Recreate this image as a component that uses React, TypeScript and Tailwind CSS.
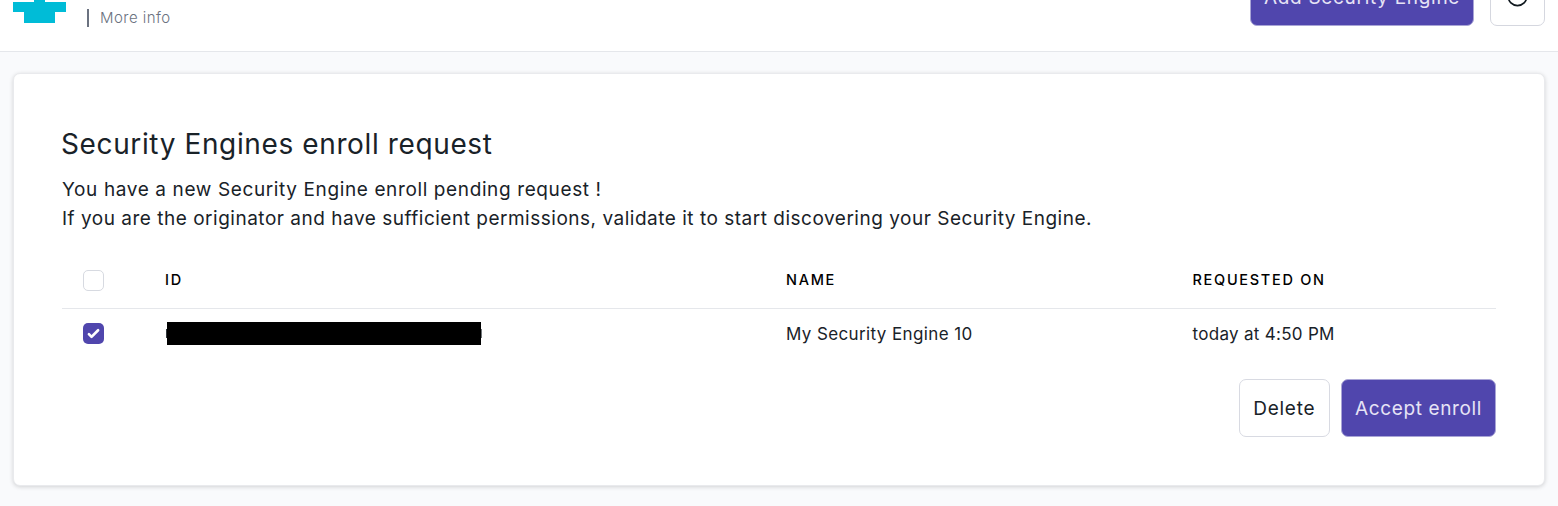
import type { ReactNode } from "react";

function Th({ children }: { children: ReactNode }) {
  return (
    <div className="text-[14.5px] leading-5 font-medium text-black">
      <span className="tracking-[1.7px]">{children}</span>
    </div>
  );
}

function Logo() {
  return (
    <svg width="53" height="23" viewBox="0 0 53 23" fill="#00bcd7" shapeRendering="crispEdges" aria-hidden="true">
      <rect x="21" y="0" width="11" height="2" />
      <rect x="0" y="2" width="53" height="10" />
      <rect x="11" y="12" width="31" height="11" />
    </svg>
  );
}

function Header() {
  return (
    <header className="flex h-[52px] items-start justify-between overflow-hidden border-b border-[#e5e7eb] bg-white px-[13px]">
      <div className="flex">
        <Logo />
        <div className="mt-[9px] ml-[21px] h-[18px] w-[2px] bg-[#6b7280]" />
        <span className="mt-[8px] ml-[11px] text-[15px] leading-5 font-light tracking-[0.45px] whitespace-nowrap text-[#6b7280]">
          More info
        </span>
      </div>
      <div className="-mt-[32px] flex gap-[16px]">
        <button className="flex h-[58px] w-[224px] items-center justify-center rounded-[7px] border border-[#a9a5d6] bg-[#5046ad] pt-[3px] text-[19px] whitespace-nowrap text-[#e6e3f5]">
          <span className="tracking-[0.7px]">Add Security Engine</span>
        </button>
        <button className="flex h-[58px] w-[55px] items-center justify-center rounded-[7px] border border-[#d5d7df] bg-white">
          <svg width="22" height="22" viewBox="0 0 22 22" fill="none" stroke="#111a20" strokeWidth="1.7">
            <circle cx="10.5" cy="10.3" r="9.3" />
          </svg>
        </button>
      </div>
    </header>
  );
}

export default function App() {
  return (
    <div className="h-[506px] overflow-hidden bg-[#f9fafc] font-['Inter','Liberation_Sans',sans-serif] text-[#192228]">
      <Header />
      <main className="px-[13px] pt-[21px]">
        <section className="flex h-[413px] flex-col rounded-[7px] border border-[#e9eaed] bg-white px-[48px] pt-[50px] shadow-[0_1px_4px_rgba(0,0,0,0.16)]">
          <h1 className="-ml-px h-[40px] text-[28px] leading-[40px] whitespace-nowrap">
            <span className="tracking-[0.62px]">Security Engines enroll request</span>
          </h1>
          <div className="mt-[11px] text-[19px] leading-[29px] whitespace-nowrap">
            <p><span className="tracking-[0.62px]">You have a new Security Engine enroll pending request !</span></p>
            <p><span className="tracking-[0.51px]">If you are the originator and have sufficient permissions, validate it to start discovering your Security Engine.</span></p>
          </div>
          <div className="mt-[19px] grid h-[57px] w-[1434px] grid-cols-[103px_621px_406.5px_1fr] items-center border-b border-[#e5e7eb]">
            <div className="pt-px pl-[21px]">
              <div className="h-[21px] w-[21px] rounded-[5px] border border-[#d7dae1] bg-white" />
            </div>
            <Th>ID</Th>
            <Th>NAME</Th>
            <Th>REQUESTED ON</Th>
          </div>
          <div className="grid h-[50px] w-[1434px] grid-cols-[103px_621px_406.5px_1fr] items-center text-[17px] leading-6">
            <div className="pb-px pl-[21px]">
              <div className="flex h-[21px] w-[21px] items-center justify-center rounded-[5px] bg-[#5046ad]">
                <svg width="21" height="21" viewBox="0 0 16 16" fill="white">
                  <path d="M12.207 4.793a1 1 0 010 1.414l-5 5a1 1 0 01-1.414 0l-2-2a1 1 0 011.414-1.414L6.5 9.086l4.293-4.293a1 1 0 011.414 0z" />
                </svg>
              </div>
            </div>
            <div className="flex items-center pb-px pl-px">
              <div className="h-[9px] w-px bg-[#30363a]" />
              <div className="h-[23px] w-[314px] bg-black" />
              <div className="h-[9px] w-px bg-[#72777a]" />
            </div>
            <div><span className="tracking-[0.38px]">My Security Engine 10</span></div>
            <div><span className="tracking-[0.3px]">today at 4:50 PM</span></div>
          </div>
          <div className="mt-[20px] flex w-[1434px] justify-end gap-[11px] text-[19px]">
            <button className="flex h-[58px] w-[91.5px] items-center justify-center rounded-[7px] border border-[#d8dae2] bg-white pt-[2px]">
              <span className="tracking-[0.75px]">Delete</span>
            </button>
            <button className="flex h-[58px] w-[155px] items-center justify-center rounded-[7px] border border-[#a9a5d6] bg-[#5046ad] pt-[2px] text-[#e6e3f5]">
              <span className="tracking-[0.62px]">Accept enroll</span>
            </button>
          </div>
        </section>
      </main>
    </div>
  );
}
